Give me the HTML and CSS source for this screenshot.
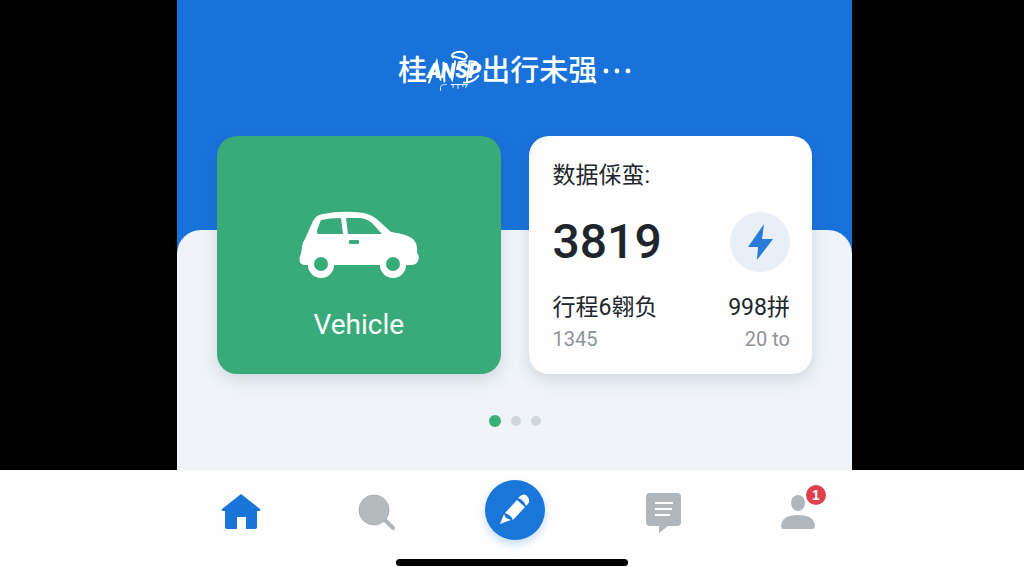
FILE: index.html
```html
<!DOCTYPE html>
<html lang="zh-CN">
<head>
  <meta charset="UTF-8">
  <meta name="viewport" content="width=device-width, initial-scale=1">
  <title>Vehicle</title>
  <link rel="stylesheet" href="styles.css">
</head>
<body>
  <main class="screen">
    <h1 class="title">
      <span>桂</span>
      <span class="tag">ANSP
        <svg class="tag-paint" viewBox="0 0 56 44" fill="none" stroke="#fff" stroke-linecap="round" aria-hidden="true">
          <path d="M27 8C22 3 37 -1 41 6Q42 9 38 10M28 7L38 10" stroke-width="2"/>
          <path d="M2 34L10 12L14 31M18 33L17 13L26 31L29 12M40 12L33 13L31 20M41 34L44 12Q56 12 52 20Q50 25 44 25M53 27Q48 34 38 34" stroke-width="2"/>
          <path d="M14 42V39C14 36 17 36 20 36M25 36H42M27 36V39M32 36V40M37 36V38M41 36L40 39" stroke-width="1"/>
        </svg>
      </span>
      <span>出行未强</span>
      <svg class="more" viewBox="0 0 28 6" fill="#fff" aria-hidden="true">
        <circle cx="3" cy="3" r="2.4"/><circle cx="14" cy="3" r="2.4"/><circle cx="25" cy="3" r="2.4"/>
      </svg>
    </h1>

    <section class="sheet">
      <div class="cards">
        <a class="card vehicle" href="#vehicle">
          <svg class="car" viewBox="0 0 120 68" aria-hidden="true">
            <path fill="#fff" d="M2 43L3 36Q3 32 6 28L14 10Q17 4 24 3Q43-1 65 2Q74 4 81 11L92 21Q108 23 114 28Q119 33 118 42Q121 45 119 50Q117 54 112 54H107A13 13 0 0 1 81 54H35A13 13 0 0 1 9 54H5Q-1 53 1 45Z"/>
            <circle cx="22" cy="53" r="13" fill="#fff"/><circle cx="94" cy="53" r="13" fill="#fff"/>
            <g fill="#39aa79">
              <circle cx="22" cy="53" r="7"/><circle cx="94" cy="53" r="7"/>
              <path d="M22 9Q31 7 42 7L44 23H20Q17 23 18 19Z"/>
              <path d="M47 7H60Q67 7 73 12L83 23H49Z"/>
              <rect x="50" y="29" width="10" height="4" rx="1"/>
            </g>
          </svg>
          <span class="vehicle-name">Vehicle</span>
        </a>

        <article class="card stats">
          <h2 class="stats-title">数据倸蛮:</h2>
          <div class="row total">
            <strong class="number">3819</strong>
            <span class="bolt">
              <svg viewBox="0 0 60 60" aria-hidden="true"><path fill="#287bd8" d="M34 12L18 35H28L27 48L43 27H32Z"/></svg>
            </span>
          </div>
          <div class="row trip"><span>行程6翱负</span><span>998拼</span></div>
          <div class="row detail"><span>1345</span><span>20 to</span></div>
        </article>
      </div>

      <div class="dots">
        <span class="dot active"></span>
        <span class="dot"></span>
        <span class="dot"></span>
      </div>
    </section>
  </main>

  <footer class="footer">
    <nav class="tabs">
      <button class="tab" type="button" aria-label="Home">
        <svg viewBox="0 0 40 40" aria-hidden="true">
          <path fill="#1b75d8" d="M20 2L39 17Q40 19 38 19H36V35Q36 37 34 37H25V25H16V37H7Q4 37 4 35V19H2Q0 19 1 17Z"/>
        </svg>
      </button>
      <button class="tab" type="button" aria-label="Search">
        <svg viewBox="0 0 40 40" aria-hidden="true">
          <path d="M29 28L37 36" stroke="#b1b5b8" stroke-width="4" stroke-linecap="round"/>
          <circle cx="18" cy="18" r="15" fill="#b5babd" stroke="#aaafb2"/>
        </svg>
      </button>
      <button class="tab edit" type="button" aria-label="Edit">
        <svg viewBox="0 0 60 60" fill="#fff" aria-hidden="true">
          <path d="M15 44L19 34L21 38L26 40Z"/>
          <path d="M20 33L32 20L40 27L28 40Q26 35 20 33Z"/>
          <path d="M33 18Q37 13 41 15Q46 19 43 24L41 26Q39 20 33 18Z"/>
        </svg>
      </button>
      <button class="tab" type="button" aria-label="Messages">
        <svg viewBox="0 0 40 40" aria-hidden="true">
          <path fill="#b1b6ba" d="M7 1H34Q38 1 38 5V30Q38 34 34 34H25L16 41V34H7Q3 34 3 30V5Q3 1 7 1Z"/>
          <path d="M12 11H30M12 17H29M12 23H27" stroke="#fff" stroke-width="2"/>
        </svg>
      </button>
      <button class="tab" type="button" aria-label="Profile">
        <svg viewBox="0 0 40 40" aria-hidden="true">
          <ellipse cx="20" cy="11" rx="7" ry="8" fill="#b1b6ba"/>
          <path fill="#b1b6ba" d="M3 34Q4 23 20 23Q36 23 37 34Q37 37 34 37H6Q3 37 3 34Z"/>
        </svg>
        <span class="badge">1</span>
      </button>
    </nav>
    <div class="home-bar"></div>
  </footer>
</body>
</html>
```

FILE: styles.css
```css
* { box-sizing: border-box; }

body {
  margin: 0;
  min-height: 100vh;
  display: flex;
  flex-direction: column;
  background: #000;
  font-family: Roboto, "Noto Sans CJK SC", sans-serif;
}

.screen, .tabs { margin: 0 16.8% 0 17.3%; }

.screen {
  flex: 1;
  display: flex;
  flex-direction: column;
  background: #1972da;
}

.title {
  display: flex;
  align-items: center;
  justify-content: center;
  height: 44px;
  margin: 49px 0 137px;
  color: #fff;
  font-size: 29px;
  font-weight: 500;
  line-height: 44px;
}
.tag {
  position: relative;
  font-size: 21px;
  font-style: italic;
  font-weight: 900;
}
.tag-paint { position: absolute; left: 0; top: 0; width: 100%; height: 100%; }
.more { width: 28px; margin-left: 6px; }

.sheet {
  flex: 1;
  padding: 0 40px;
  border-radius: 24px 24px 0 0;
  background: #f0f4f8;
}
.cards {
  display: grid;
  grid-template-columns: 1fr 1fr;
  gap: 28px;
  margin-top: -94px;
}
.card {
  min-height: 238px;
  border-radius: 20px;
  box-shadow: 0 6px 16px rgba(40, 70, 100, 0.16);
}

.vehicle {
  display: flex;
  flex-direction: column;
  align-items: center;
  padding-top: 75px;
  background: #39aa79;
  color: #fff;
  text-decoration: none;
}
.car { width: 120px; height: 68px; }
.vehicle-name { margin-top: 28px; font-size: 28px; line-height: 36px; }

.stats { padding: 24px 22px 20px 24px; background: #fefefe; color: #20252b; }
.stats-title { margin: 0; font-size: 23px; font-weight: 400; line-height: 32px; }
.row { display: flex; align-items: center; justify-content: space-between; }
.total { margin-top: 20px; }
.number { font-size: 48px; font-weight: 500; line-height: 60px; }
.bolt { width: 60px; height: 60px; border-radius: 50%; background: #e9eff6; }
.bolt svg { display: block; }
.trip { margin-top: 20px; font-size: 23px; line-height: 32px; }
.detail { color: #8e9398; font-size: 20px; line-height: 30px; }

.dots {
  display: flex;
  align-items: center;
  justify-content: center;
  gap: 10px;
  margin-top: 41px;
}
.dot { width: 10px; height: 10px; border-radius: 50%; background: #d1d6da; }
.dot.active { width: 12px; height: 12px; background: #38b078; }

.footer { padding: 10px 0; background: #fefefe; }
.tabs {
  display: grid;
  grid-template-columns: 19fr 21fr 20fr 24fr 16fr;
  align-items: center;
  justify-items: center;
}
.tab {
  position: relative;
  width: 40px;
  height: 44px;
  padding: 4px 0 0;
  border: 0;
  background: none;
  cursor: pointer;
}
.tab svg { display: block; width: 100%; overflow: visible; }
.edit {
  width: 60px;
  height: 60px;
  padding: 0;
  border-radius: 50%;
  background: #1b76d9;
  box-shadow: 0 4px 8px rgba(27, 118, 217, 0.25);
}
.badge {
  position: absolute;
  top: -3px;
  right: -8px;
  width: 20px;
  height: 20px;
  border-radius: 50%;
  background: #e0404c;
  color: #fff;
  font-size: 14px;
  font-weight: 700;
  line-height: 20px;
}
.home-bar {
  width: 232px;
  height: 7px;
  margin: 19px auto 0;
  border-radius: 4px;
  background: #000;
}
```
